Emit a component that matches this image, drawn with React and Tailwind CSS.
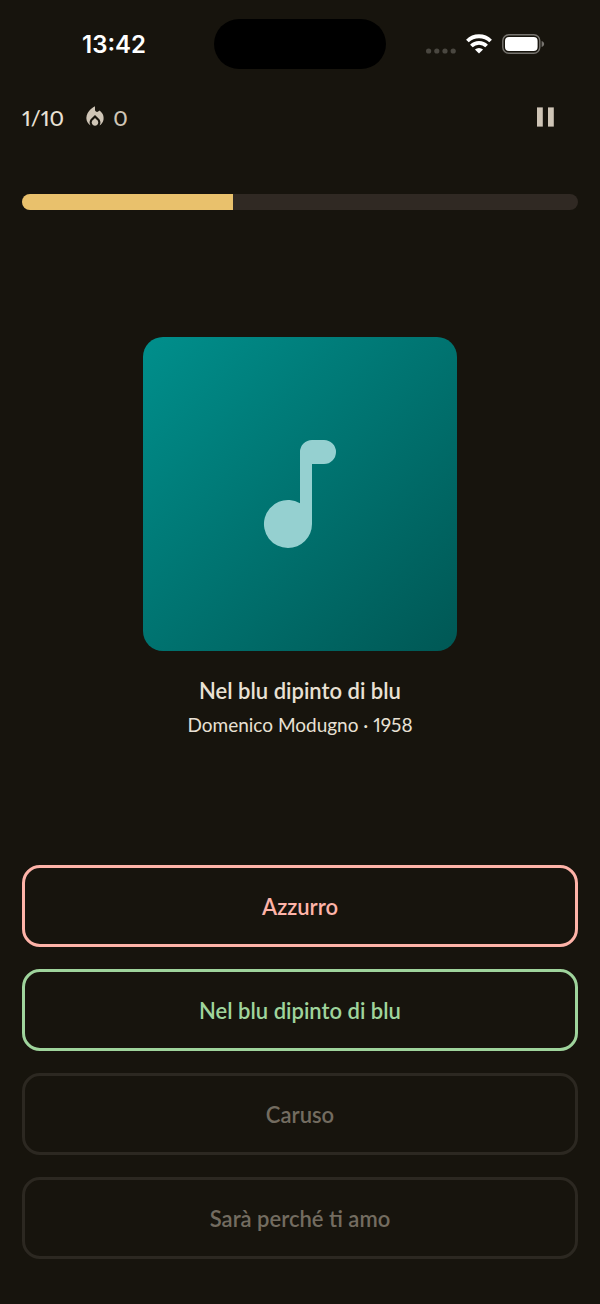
import React, { useState } from 'react';
import { MdLocalFireDepartment } from 'react-icons/md';

const song = { title: 'Nel blu dipinto di blu', artist: 'Domenico Modugno', year: 1958 };

const answers = [
    { label: 'Azzurro', state: 'wrong' },
    { label: 'Nel blu dipinto di blu', state: 'correct' },
    { label: 'Caruso', state: 'idle' },
    { label: 'Sarà perché ti amo', state: 'idle' },
];

const answerStyles = {
    wrong: 'border-[#feb3a8] text-[#feb3a8]',
    correct: 'border-[#9fd49c] text-[#9fd49c]',
    idle: 'border-[#2c2821] text-[#736c60]',
};

const StatusBar = () => (
    <div className="grid grid-cols-[1fr_172px_1fr] items-center pt-[19px]">
        <div className="pt-0.5 pl-3.5 text-center font-['Inter',sans-serif] text-2xl font-semibold text-white">13:42</div>
        <div className="h-[50px] rounded-full bg-black" />
        <div className="flex items-center justify-end gap-2.5 pr-[55px]">
            <svg className="mt-3.5 h-1.5 w-[30px]" viewBox="0 0 30 6" fill="#4a4740">
                <circle cx="2.6" cy="3" r="2.6" />
                <circle cx="10.8" cy="3" r="2.6" />
                <circle cx="19" cy="3" r="2.6" />
                <circle cx="27.2" cy="3" r="2.6" />
            </svg>
            <svg className="h-5 w-[26px]" viewBox="0 0 26 20" fill="none" stroke="#fff" strokeWidth="3.8">
                <path d="M1.4 7a16.6 16.6 0 0 1 23.2 0" />
                <path d="M5.4 12a10.8 10.8 0 0 1 15.2 0" />
                <path d="M13 19.6l-4.1-4.1a6 6 0 0 1 8.2 0z" fill="#fff" stroke="none" />
            </svg>
            <svg className="h-5 w-[43px]" viewBox="0 0 43 20">
                <rect x="0.8" y="0.8" width="37" height="18.4" rx="6" fill="none" stroke="#77746f" strokeWidth="1.4" />
                <rect x="3" y="3" width="32.6" height="14" rx="4" fill="#fff" />
                <path d="M39.6 7c3.4 1 3.4 5 0 6z" fill="#77746f" />
            </svg>
        </div>
    </div>
);

const Header = ({ paused, onPause }) => (
    <header className="flex h-12 items-center justify-between px-[22px] text-[22px] font-medium proportional-nums">
        <div className="flex items-center">
            <span className="text-[#e9e1d4]">1/10</span>
            <MdLocalFireDepartment className="ml-[18px] size-[26px] text-[#cfc5b6]" />
            <span className="ml-[5px] text-[#cfc5b6]">0</span>
        </div>
        <button
            type="button"
            aria-label={paused ? 'Resume' : 'Pause'}
            onClick={onPause}
            className="mr-2 flex size-12 items-center justify-center"
        >
            <svg className="h-5 w-[18px]" viewBox="0 0 18 20" fill="#cfc5b6">
                <rect x="0" y="0.4" width="5.8" height="19.2" />
                <rect x="11" y="0.4" width="5.8" height="19.2" />
            </svg>
        </button>
    </header>
);

const Cover = () => (
    <div className="flex size-[314px] items-center justify-center rounded-[20px] bg-linear-to-br from-[#008f8c] to-[#005855]">
        <svg className="size-36" viewBox="0 0 24 24" fill="#95d0d0">
            <path d="M10 21a4 4 0 1 1 2-7.46V5a2 2 0 0 1 2-2h2a2 2 0 0 1 0 4h-2v10a4 4 0 0 1-4 4z" />
        </svg>
    </div>
);

const App = () => {
    const [paused, setPaused] = useState(false);
    const progress = 38;

    return (
        <div className="flex min-h-screen flex-col bg-[#17140d] pb-[45px] font-['Lato',sans-serif]">
            <StatusBar />
            <div className="mt-6">
                <Header paused={paused} onPause={() => setPaused(!paused)} />
            </div>

            <div
                role="progressbar"
                aria-label="Time"
                aria-valuenow={progress}
                className="mx-[22px] mt-[53px] h-4 overflow-hidden rounded-full bg-[#302923]"
            >
                <div className="h-full bg-[#e9c16c]" style={{ width: `${progress}%` }} />
            </div>

            <main className="flex flex-1 flex-col items-center justify-center">
                <Cover />
                <h1 className="mt-6 text-[22px] leading-8 font-semibold text-[#e9e1d4]">{song.title}</h1>
                <p className="mt-1 text-[19px] leading-7 text-[#e9e1d4] proportional-nums">
                    {song.artist} · {song.year}
                </p>
            </main>

            <div className="flex flex-col gap-[22px] px-[22px]">
                {answers.map(answer => (
                    <button
                        key={answer.label}
                        type="button"
                        disabled={answer.state === 'idle'}
                        className={`h-[82px] rounded-[18px] border-3 text-[22px] font-semibold ${answerStyles[answer.state]}`}
                    >
                        {answer.label}
                    </button>
                ))}
            </div>
        </div>
    );
};

export default App;
